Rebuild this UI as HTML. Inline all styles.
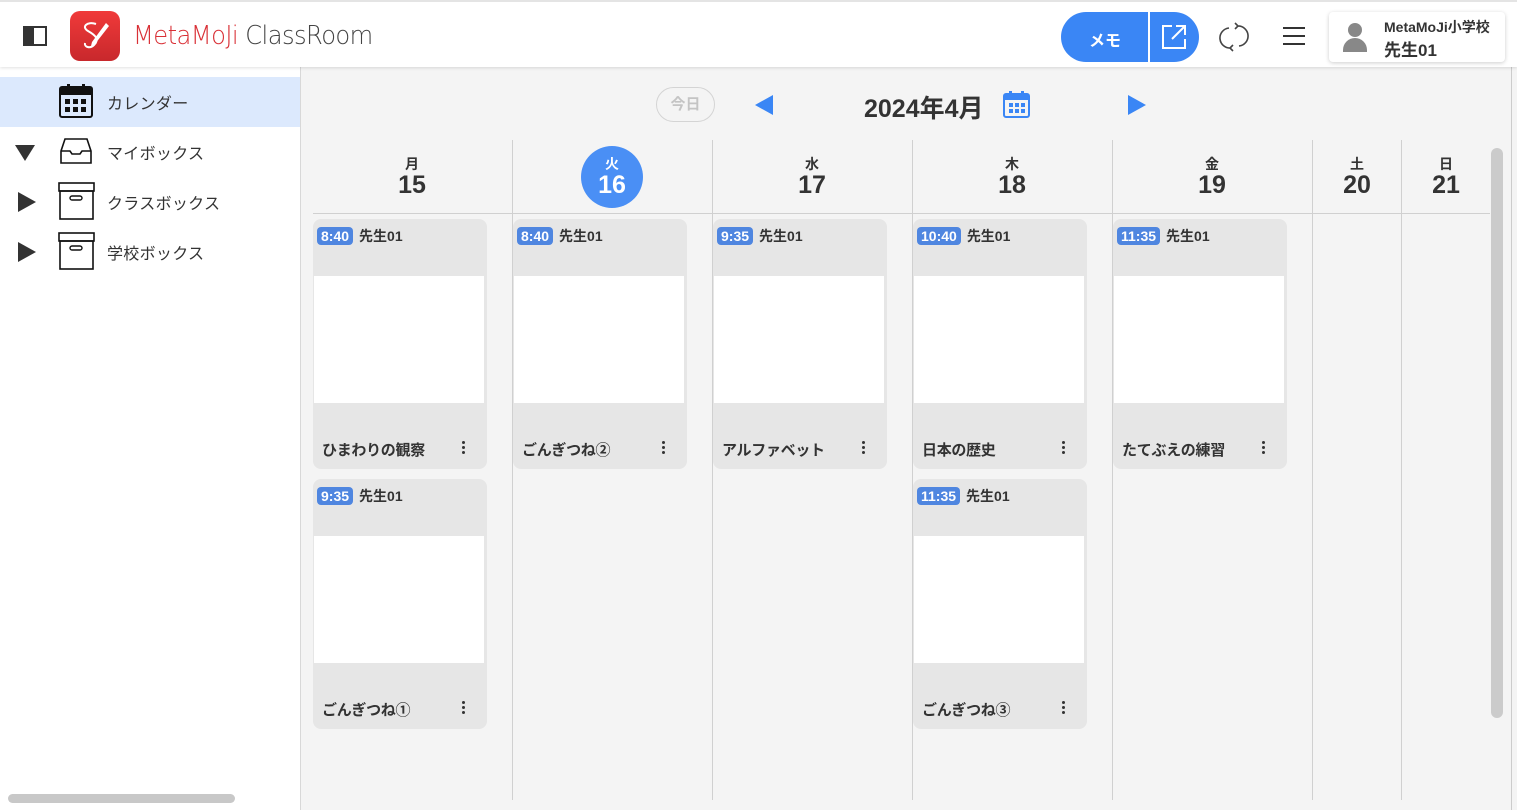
<!DOCTYPE html>
<html><head><meta charset="utf-8"><style>
*{box-sizing:border-box;margin:0;padding:0}
body{width:1517px;height:810px;overflow:hidden;background:#f4f4f4;font-family:"Liberation Sans","Noto Sans CJK JP",sans-serif;color:#333;position:relative}
.hdr{position:absolute;left:0;top:0;width:1517px;height:67px;background:#fff;border-top:2px solid #e4e4e4;box-shadow:0 1px 3px rgba(0,0,0,.12);z-index:2}
.side{position:absolute;left:0;top:67px;width:301px;height:743px;background:#fff;border-right:1px solid #d8d8d8}
.item{position:absolute;left:0;width:300px;height:50px;font-size:16px;display:flex;align-items:center}
.item span{position:absolute;left:107px;letter-spacing:0.3px}
.abs{position:absolute}
.vl{position:absolute;top:140px;width:1px;height:660px;background:#d0d0d0}
.day{position:absolute;top:156px;text-align:center;font-weight:bold;color:#333}
.day .w{font-size:14px;line-height:16px}
.day .n{font-size:25px;line-height:26px}
.card{position:absolute;width:174px;height:250px;background:#e6e6e6;border-radius:8px;overflow:hidden}
.card .t{position:absolute;left:4px;top:7px;font-size:14px;font-weight:bold;display:flex;align-items:center}
.card .t b{background:#4f86e0;color:#fff;border-radius:4px;padding:1px 4px;margin-right:6px;font-size:14px}
.card .img{position:absolute;left:1px;top:57px;width:170px;height:127px;background:#fff}
.card .ti{position:absolute;left:9px;top:220px;font-size:15px;font-weight:bold;letter-spacing:-0.3px}
.card .dots{position:absolute;left:149px;top:222px;width:3px}
.card .dots i{display:block;width:3px;height:3px;background:#333;border-radius:50%;margin-bottom:2px}
</style></head><body>
<div class="hdr">
 <div class="abs" style="left:23px;top:24px;width:24px;height:20px;border:2px solid #333;"><div style="width:9px;height:100%;background:#333"></div></div>
 <div class="abs" style="left:70px;top:9px;width:50px;height:50px;border-radius:10px;background:linear-gradient(#f03a3a,#c8282c)">
  <svg width="50" height="50" viewBox="0 0 50 50"><path d="M26 13c-9-3-15 3-8 7s12 8 6 14c-4 4-10 2-9-2" stroke="#fff" stroke-width="2" fill="none"/><path d="M36 12l3 3-14 18-4 2 1-4z" fill="#fff"/></svg>
 </div>
 <div class="abs" style="left:133px;top:19px;font-size:26px;color:#d93036;letter-spacing:-0.6px;font-family:'DejaVu Sans',sans-serif;font-weight:200;transform:scaleX(0.93);transform-origin:left">MetaMoJi <span style="color:#444">ClassRoom</span></div>
 <div class="abs" style="left:1061px;top:10px;width:138px;height:50px;border-radius:25px;background:#3a86f5;color:#fff;font-size:16px;font-weight:bold">
  <div class="abs" style="left:28px;top:15px">メモ</div>
  <div class="abs" style="left:87px;top:0;width:2px;height:50px;background:#fff"></div>
  <svg class="abs" style="left:99px;top:11px" width="28" height="28" viewBox="0 0 28 28"><path d="M12 3H3v22h22v-9M16 3h9v9M25 3L12 16" stroke="#fff" stroke-width="2" fill="none"/></svg>
 </div>
 <svg class="abs" style="left:1219px;top:20px" width="30" height="30" viewBox="0 0 30 30"><path d="M10 6a10 10 0 0 0 2 20M20 24a10 10 0 0 0-2-20M16 1l3 3-3 3M14 23l-3 3 3 3" stroke="#444" stroke-width="1.6" fill="none"/></svg>
 <div class="abs" style="left:1283px;top:25px;width:22px;height:2px;background:#333;box-shadow:0 8px 0 #333,0 16px 0 #333"></div>
 <div class="abs" style="left:1329px;top:10px;width:176px;height:50px;background:#fff;border-radius:4px;box-shadow:0 1px 4px rgba(0,0,0,.2)">
  <div class="abs" style="left:19px;top:11px;width:14px;height:14px;border-radius:50%;background:#888"></div>
  <div class="abs" style="left:14px;top:26px;width:24px;height:14px;border-radius:12px 12px 0 0;background:#888"></div>
  <div class="abs" style="left:55px;top:5px;font-size:14px;font-weight:bold">MetaMoJi小学校</div>
  <div class="abs" style="left:55px;top:24px;font-size:17px;font-weight:bold">先生01</div>
 </div>
</div>
<div class="side">
 <div class="item" style="top:10px;background:#dce9fd"><svg class="abs" style="left:58px;top:6px" width="36" height="36" viewBox="0 0 36 36"><rect x="2" y="4" width="32" height="30" rx="2" fill="none" stroke="#111" stroke-width="2"/><rect x="2" y="4" width="32" height="8" fill="#111"/><rect x="9" y="1" width="3" height="7" fill="#111"/><rect x="24" y="1" width="3" height="7" fill="#111"/><g fill="#111"><rect x="7" y="16" width="5" height="5"/><rect x="15" y="16" width="5" height="5"/><rect x="23" y="16" width="5" height="5"/><rect x="7" y="24" width="5" height="5"/><rect x="15" y="24" width="5" height="5"/><rect x="23" y="24" width="5" height="5"/></g></svg><span>カレンダー</span></div>
 <div class="item" style="top:60px"><svg class="abs" style="left:15px;top:18px" width="20" height="16"><path d="M0 0h20L10 16z" fill="#333"/></svg><svg class="abs" style="left:60px;top:10px" width="32" height="28" viewBox="0 0 32 28"><path d="M5 2h22l4 12v12H1V14zM1 14h9l2 3h8l2-3h9" fill="none" stroke="#111" stroke-width="1.6"/></svg><span>マイボックス</span></div>
 <div class="item" style="top:110px"><svg class="abs" style="left:18px;top:15px" width="18" height="20"><path d="M0 0l18 10L0 20z" fill="#333"/></svg><svg class="abs" style="left:58px;top:5px" width="37" height="38" viewBox="0 0 37 38"><rect x="1" y="1" width="35" height="8" fill="none" stroke="#111" stroke-width="1.6"/><rect x="2" y="9" width="33" height="28" fill="none" stroke="#111" stroke-width="1.6"/><rect x="12" y="14" width="12" height="4" rx="2" fill="none" stroke="#111" stroke-width="1.4"/></svg><span>クラスボックス</span></div>
 <div class="item" style="top:160px"><svg class="abs" style="left:18px;top:15px" width="18" height="20"><path d="M0 0l18 10L0 20z" fill="#333"/></svg><svg class="abs" style="left:58px;top:5px" width="37" height="38" viewBox="0 0 37 38"><rect x="1" y="1" width="35" height="8" fill="none" stroke="#111" stroke-width="1.6"/><rect x="2" y="9" width="33" height="28" fill="none" stroke="#111" stroke-width="1.6"/><rect x="12" y="14" width="12" height="4" rx="2" fill="none" stroke="#111" stroke-width="1.4"/></svg><span>学校ボックス</span></div>
 <div class="abs" style="left:8px;top:727px;width:227px;height:9px;border-radius:5px;background:#c8c8c8"></div>
</div>
<div class="abs" style="left:656px;top:87px;width:59px;height:35px;border:1px solid #d4d4d4;border-radius:18px;color:#c4c4c4;font-size:15px;text-align:center;line-height:33px;font-weight:bold">今日</div>
<svg class="abs" style="left:755px;top:95px" width="18" height="20"><path d="M18 0L0 10l18 10z" fill="#3a86f5"/></svg>
<div class="abs" style="left:864px;top:89px;font-size:25px;font-weight:bold">2024年4月</div>
<svg class="abs" style="left:1003px;top:91px" width="27" height="27" viewBox="0 0 27 27"><rect x="1" y="3" width="25" height="23" rx="2" fill="none" stroke="#3a86f5" stroke-width="2"/><rect x="1" y="3" width="25" height="6" fill="#3a86f5"/><rect x="6" y="0" width="3" height="6" fill="#3a86f5"/><rect x="18" y="0" width="3" height="6" fill="#3a86f5"/><g fill="#3a86f5"><rect x="6" y="12" width="4" height="4"/><rect x="12" y="12" width="4" height="4"/><rect x="18" y="12" width="4" height="4"/><rect x="6" y="18" width="4" height="4"/><rect x="12" y="18" width="4" height="4"/><rect x="18" y="18" width="4" height="4"/></g></svg>
<svg class="abs" style="left:1128px;top:95px" width="18" height="20"><path d="M0 0l18 10L0 20z" fill="#3a86f5"/></svg>
<div class="abs" style="left:313px;top:213px;width:1177px;height:1px;background:#d0d0d0"></div>
<div class="vl" style="left:512px"></div><div class="vl" style="left:712px"></div><div class="vl" style="left:912px"></div><div class="vl" style="left:1112px"></div><div class="vl" style="left:1312px"></div><div class="vl" style="left:1401px"></div>
<div class="abs" style="left:581px;top:146px;width:62px;height:62px;border-radius:50%;background:#4a8ff5"></div>
<div class="day" style="left:362px;width:100px"><div class="w">月</div><div class="n">15</div></div>
<div class="day" style="left:562px;width:100px;color:#fff"><div class="w">火</div><div class="n">16</div></div>
<div class="day" style="left:762px;width:100px"><div class="w">水</div><div class="n">17</div></div>
<div class="day" style="left:962px;width:100px"><div class="w">木</div><div class="n">18</div></div>
<div class="day" style="left:1162px;width:100px"><div class="w">金</div><div class="n">19</div></div>
<div class="day" style="left:1317px;width:80px"><div class="w">土</div><div class="n">20</div></div>
<div class="day" style="left:1406px;width:80px"><div class="w">日</div><div class="n">21</div></div>
<div class="abs" style="left:1491px;top:148px;width:12px;height:570px;border-radius:6px;background:#cbcbcb"></div>
<div class="abs" style="left:1511px;top:0;width:1px;height:810px;background:#ccc"></div>

<div class="card" style="left:313px;top:219px"><div class="t"><b>8:40</b>先生01</div><div class="img"></div><div class="ti">ひまわりの観察</div><div class="dots"><i></i><i></i><i></i></div></div>
<div class="card" style="left:513px;top:219px"><div class="t"><b>8:40</b>先生01</div><div class="img"></div><div class="ti">ごんぎつね②</div><div class="dots"><i></i><i></i><i></i></div></div>
<div class="card" style="left:713px;top:219px"><div class="t"><b>9:35</b>先生01</div><div class="img"></div><div class="ti">アルファベット</div><div class="dots"><i></i><i></i><i></i></div></div>
<div class="card" style="left:913px;top:219px"><div class="t"><b>10:40</b>先生01</div><div class="img"></div><div class="ti">日本の歴史</div><div class="dots"><i></i><i></i><i></i></div></div>
<div class="card" style="left:1113px;top:219px"><div class="t"><b>11:35</b>先生01</div><div class="img"></div><div class="ti">たてぶえの練習</div><div class="dots"><i></i><i></i><i></i></div></div>
<div class="card" style="left:313px;top:479px"><div class="t"><b>9:35</b>先生01</div><div class="img"></div><div class="ti">ごんぎつね①</div><div class="dots"><i></i><i></i><i></i></div></div>
<div class="card" style="left:913px;top:479px"><div class="t"><b>11:35</b>先生01</div><div class="img"></div><div class="ti">ごんぎつね③</div><div class="dots"><i></i><i></i><i></i></div></div>
</body></html>
